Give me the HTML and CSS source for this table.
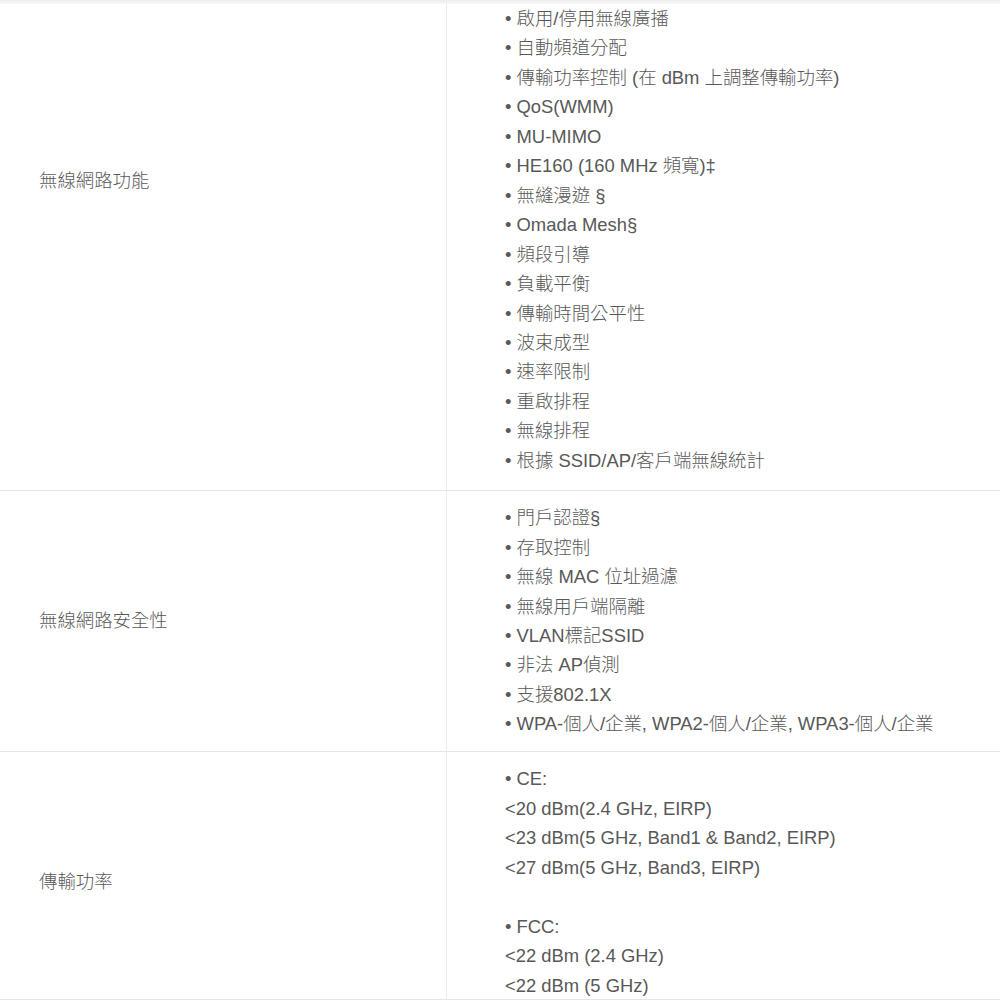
FILE: index.html
```html
<!DOCTYPE html>
<html lang="zh-Hant">
<head>
<meta charset="utf-8">
<title>規格</title>
<link rel="stylesheet" href="styles.css">
</head>
<body>
<div class="topband"></div>
<div class="spec">
  <div class="row row-first">
    <div class="label label-first">無線網路功能</div>
    <div class="value">
      <div>• 啟用/停用無線廣播</div>
      <div>• 自動頻道分配</div>
      <div>• 傳輸功率控制 (在 dBm 上調整傳輸功率)</div>
      <div>• QoS(WMM)</div>
      <div>• MU-MIMO</div>
      <div>• HE160 (160 MHz 頻寬)‡</div>
      <div>• 無縫漫遊 §</div>
      <div>• Omada Mesh§</div>
      <div>• 頻段引導</div>
      <div>• 負載平衡</div>
      <div>• 傳輸時間公平性</div>
      <div>• 波束成型</div>
      <div>• 速率限制</div>
      <div>• 重啟排程</div>
      <div>• 無線排程</div>
      <div>• 根據 SSID/AP/客戶端無線統計</div>
    </div>
  </div>
  <div class="row">
    <div class="label label-center">無線網路安全性</div>
    <div class="value">
      <div>• 門戶認證§</div>
      <div>• 存取控制</div>
      <div>• 無線 MAC 位址過濾</div>
      <div>• 無線用戶端隔離</div>
      <div>• VLAN標記SSID</div>
      <div>• 非法 AP偵測</div>
      <div>• 支援802.1X</div>
      <div>• WPA-個人/企業, WPA2-個人/企業, WPA3-個人/企業</div>
    </div>
  </div>
  <div class="row row-last">
    <div class="label label-last">傳輸功率</div>
    <div class="value">
      <div>• CE:</div>
      <div>&lt;20 dBm(2.4 GHz, EIRP)</div>
      <div>&lt;23 dBm(5 GHz, Band1 &amp; Band2, EIRP)</div>
      <div>&lt;27 dBm(5 GHz, Band3, EIRP)</div>
      <div class="blank"></div>
      <div>• FCC:</div>
      <div>&lt;22 dBm (2.4 GHz)</div>
      <div>&lt;22 dBm (5 GHz)</div>
    </div>
  </div>
</div>
</body>
</html>
```
FILE: styles.css
```css
html, body {
  margin: 0;
  padding: 0;
  background: #ffffff;
}
body {
  font-family: "Liberation Sans", Arial, "Noto Sans CJK TC", sans-serif;
  font-size: 18.4px;
  font-weight: 300;
  line-height: 29.45px;
  color: #585858;
  overflow: hidden;
  height: 1000px;
}
.topband {
  height: 4px;
  background: linear-gradient(#ededed, #f7f7f7);
}
.spec {
  display: flex;
  flex-direction: column;
}
.row {
  display: grid;
  grid-template-columns: 447px 1fr;
  border-bottom: 1px solid #e6e6e6;
}
.label {
  padding-left: 39px;
  border-right: 1px solid #ebebeb;
  white-space: nowrap;
}
.label-center {
  display: flex;
  align-items: center;
}
.label-first {
  padding-top: 162px;
}
.label-last {
  padding-top: 115px;
}
.value {
  padding: 12.3px 0 12.3px 58px;
  white-space: nowrap;
}
.row-first .value {
  padding-top: 0;
  padding-bottom: 14.6px;
}
.row-last {
  height: 247px;
}
.row-last .value {
  padding-bottom: 0;
}
.blank {
  height: 29.45px;
}
```
